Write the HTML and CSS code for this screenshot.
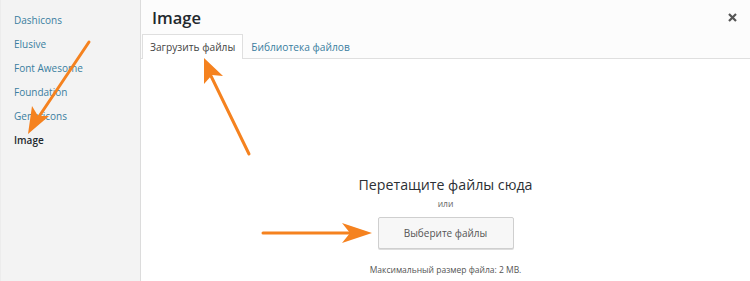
FILE: index.html
```html
<!DOCTYPE html>
<html lang="ru">
<head>
  <meta charset="UTF-8">
  <title>Image</title>
  <link rel="stylesheet" href="styles.css">
</head>
<body>

  <div class="frame">
    <!-- Icon set list -->
    <aside class="menu">
      <a class="menu-item" href="#">Dashicons</a>
      <a class="menu-item" href="#">Elusive</a>
      <a class="menu-item" href="#">Font Awesome</a>
      <a class="menu-item" href="#">Foundation</a>
      <a class="menu-item" href="#">Genericons</a>
      <a class="menu-item current" href="#">Image</a>
    </aside>

    <main class="panel">
      <header class="panel-head">
        <div class="title-row">
          <h1>Image</h1>
          <button class="close" title="Закрыть">
            <svg width="9" height="9" viewBox="0 0 9 9"><path d="M1 1L8 8M8 1L1 8" stroke="#555" stroke-width="2.2"/></svg>
          </button>
        </div>
        <nav class="tabs">
          <a class="tab active" href="#">Загрузить файлы</a>
          <a class="tab" href="#">Библиотека файлов</a>
        </nav>
      </header>

      <section class="uploader">
        <p class="drop-title">Перетащите файлы сюда</p>
        <p class="or">или</p>
        <button class="select-button">Выберите файлы</button>
        <p class="max-size">Максимальный размер файла: 2 MB.</p>
      </section>
    </main>

    <!-- Annotation arrows drawn over the screenshot -->
    <svg class="arrows" width="750" height="281" viewBox="0 0 750 281">
      <g stroke="#f5821f" stroke-width="3" stroke-linecap="round" fill="none">
        <line x1="89" y1="42" x2="38" y2="118"/>
        <line x1="249" y1="154" x2="211" y2="76"/>
        <line x1="263" y1="233" x2="350" y2="233"/>
      </g>
      <g fill="#f5821f">
        <path d="M28 134 L32 106 L38 116 L49 116 Z"/>
        <path d="M204 58 L223 76 L212 75 L204 84 Z"/>
        <path d="M372 233 L342 223 L350 233 L342 243 Z"/>
      </g>
    </svg>
  </div>

</body>
</html>
```

FILE: styles.css
```css
/* General Styles */
body {
  margin: 0;
  font-family: "Open Sans", "Noto Sans", sans-serif;
  background-color: #fff;
  color: #444;
}

.frame {
  position: relative;
  display: flex;
  width: 750px;
  height: 281px;
  overflow: hidden;
}

/* Sidebar */
.menu {
  display: flex;
  flex-direction: column;
  gap: 8px;
  padding: 12px 0 0 13px;
  box-sizing: border-box;
  flex: 0 0 141px;
  background-color: #f3f3f3;
  border-left: 1px solid #ececec;
  border-right: 1px solid #dcdcdc;
}

.menu-item {
  font-size: 10px;
  line-height: 16px;
  color: #3a7ea0;
  text-decoration: none;
}

.menu-item.current {
  color: #23282d;
  font-weight: 600;
}

/* Main panel */
.panel {
  flex: 1;
  display: flex;
  flex-direction: column;
  background-color: #fff;
}

.panel-head {
  background-color: #fcfcfc;
  border-bottom: 1px solid #dfdfdf;
  height: 59px;
  box-sizing: border-box;
  display: flex;
  flex-direction: column;
  justify-content: space-between;
}

.title-row {
  display: flex;
  justify-content: space-between;
  align-items: flex-start;
  padding: 4px 0 0 11px;
}

.title-row h1 {
  margin: 0;
  font-size: 16.5px;
  line-height: 28px;
  font-weight: 600;
  color: #23282d;
}

.close {
  border: none;
  background: none;
  padding: 0;
  margin: 9px 13px 0 0;
  width: 9px;
  height: 9px;
  cursor: pointer;
}

.close svg {
  display: block;
}

.tabs {
  display: flex;
  padding-left: 1px;
  margin-bottom: -1px;
}

.tab {
  font-size: 10.2px;
  line-height: 24px;
  padding: 0 7px;
  color: #3a7ea0;
  text-decoration: none;
  border: 1px solid transparent;
  border-bottom: none;
}

.tab.active {
  color: #444;
  background-color: #fff;
  border-color: #dfdfdf;
}

/* Upload area */
.uploader {
  flex: 1;
  display: flex;
  flex-direction: column;
  align-items: center;
  padding-top: 116px;
}

.drop-title {
  margin: 0;
  font-size: 14.2px;
  line-height: 20px;
  color: #2c3035;
}

.or {
  margin: 3px 0 0;
  font-size: 8.5px;
  line-height: 11px;
  color: #666;
}

.select-button {
  margin-top: 8px;
  width: 136px;
  height: 32px;
  font-family: inherit;
  font-size: 10px;
  color: #555;
  background-color: #f7f7f7;
  border: 1px solid #cfcfcf;
  border-radius: 2px;
  box-shadow: 0 1px 0 #ddd;
  cursor: pointer;
}

.max-size {
  margin: 15px 0 0;
  font-size: 8.5px;
  line-height: 12px;
  color: #555;
}

/* Overlay arrows */
.arrows {
  position: absolute;
  left: 0;
  top: 0;
  pointer-events: none;
}
```
